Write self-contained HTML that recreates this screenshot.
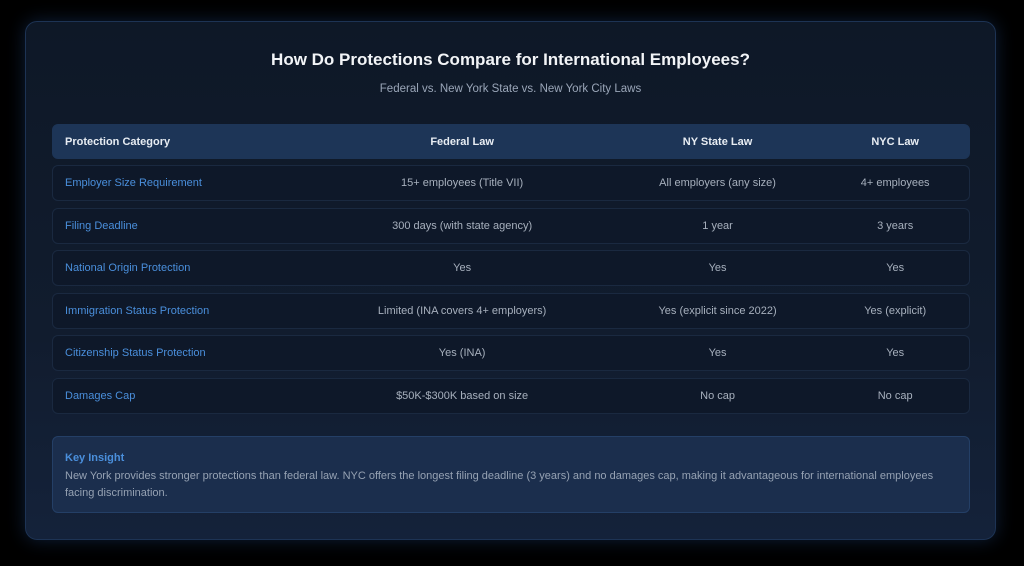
<!DOCTYPE html>
<html><head><style>
*{margin:0;padding:0;box-sizing:border-box}
body{width:1024px;height:566px;background:#000;font-family:"Liberation Sans",sans-serif;position:relative;overflow:hidden}
.card{position:absolute;left:25px;top:21px;width:971px;height:519px;border-radius:12px;border:1px solid #1d3354;background:linear-gradient(180deg,#0e1827 0%,#111c2e 60%,#14223a 100%);box-shadow:0 0 18px rgba(40,90,160,.35)}
h1{position:absolute;top:28px;left:0;width:100%;text-align:center;color:#f2f4f7;font-size:17px;font-weight:bold}
.sub{position:absolute;top:61px;left:0;width:100%;text-align:center;color:#9aa6b8;font-size:11.5px}
.row{position:absolute;left:26px;width:918px;height:36px;border-radius:6px;border:1px solid #1a2940;background:#0e1829;display:flex;align-items:center;font-size:11px;color:#a7b0bd}
.hd{background:#1d3557;border-color:#1d3557;color:#e8edf3;font-weight:bold;height:35px}
.c1{width:258px;padding-left:12px}
.c2{width:304px;text-align:center}
.c3{width:208px;text-align:center}
.c4{width:148px;text-align:center}
.row:not(.hd) .c1{color:#4a8fdc}
.ins{position:absolute;left:26px;top:414px;width:918px;height:77px;border-radius:6px;border:1px solid #243f66;background:#1b2e4d;padding:15px 12px}
.ins b{display:block;color:#4a8fdc;font-size:11px;margin-bottom:4px}
.ins p{color:#96a2b3;font-size:11px;line-height:17px}
</style></head><body>
<div class="card">
<h1>How Do Protections Compare for International Employees?</h1>
<div class="sub">Federal vs. New York State vs. New York City Laws</div>
<div class="row hd" style="top:102px"><div class="c1">Protection Category</div><div class="c2">Federal Law</div><div class="c3">NY State Law</div><div class="c4">NYC Law</div></div>
<div class="row" style="top:143px"><div class="c1">Employer Size Requirement</div><div class="c2">15+ employees (Title VII)</div><div class="c3">All employers (any size)</div><div class="c4">4+ employees</div></div>
<div class="row" style="top:186px"><div class="c1">Filing Deadline</div><div class="c2">300 days (with state agency)</div><div class="c3">1 year</div><div class="c4">3 years</div></div>
<div class="row" style="top:228px"><div class="c1">National Origin Protection</div><div class="c2">Yes</div><div class="c3">Yes</div><div class="c4">Yes</div></div>
<div class="row" style="top:271px"><div class="c1">Immigration Status Protection</div><div class="c2">Limited (INA covers 4+ employers)</div><div class="c3">Yes (explicit since 2022)</div><div class="c4">Yes (explicit)</div></div>
<div class="row" style="top:313px"><div class="c1">Citizenship Status Protection</div><div class="c2">Yes (INA)</div><div class="c3">Yes</div><div class="c4">Yes</div></div>
<div class="row" style="top:356px"><div class="c1">Damages Cap</div><div class="c2">$50K-$300K based on size</div><div class="c3">No cap</div><div class="c4">No cap</div></div>
<div class="ins"><b>Key Insight</b><p>New York provides stronger protections than federal law. NYC offers the longest filing deadline (3 years) and no damages cap, making it advantageous for international employees<br>facing discrimination.</p></div>
</div>
</body></html>
